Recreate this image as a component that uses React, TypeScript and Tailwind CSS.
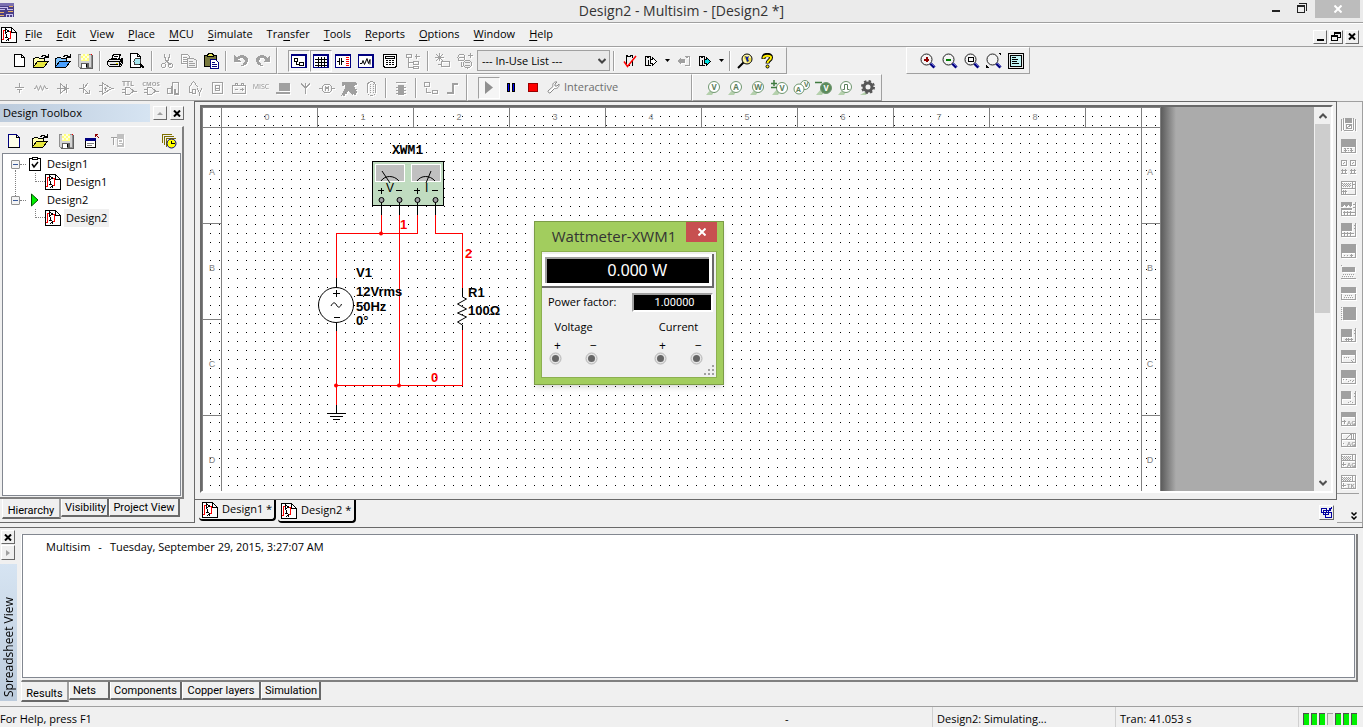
import type { ReactNode } from "react";

type Children = { children: ReactNode };

function Icon({ children }: Children) {
  return (
    <svg
      width="16"
      height="16"
      viewBox="0 0 16 16"
      fill="none"
      stroke="#000"
      shapeRendering="crispEdges"
      aria-hidden="true"
      className="shrink-0"
    >
      {children}
    </svg>
  );
}

// disabled icons: grey with a white edge at the lower right
function GrayIcon({ children }: Children) {
  return (
    <svg
      width="16"
      height="16"
      viewBox="0 0 16 16"
      fill="none"
      stroke="#a0a0a0"
      shapeRendering="crispEdges"
      aria-hidden="true"
      className="shrink-0 overflow-visible drop-shadow-[1px_1px_0_white]"
    >
      {children}
    </svg>
  );
}

function Tool({ label, children }: { label: string } & Children) {
  return (
    <button
      aria-label={label}
      className="flex h-[22px] w-[22px] shrink-0 items-center justify-center"
    >
      {children}
    </button>
  );
}

function PressedTool({ label, children }: { label: string } & Children) {
  return (
    <button
      aria-label={label}
      className="flex h-[22px] w-[22px] shrink-0 items-center justify-center border border-t-[#a0a0a0] border-r-white border-b-white border-l-[#a0a0a0] bg-[#f5f5f5]"
    >
      {children}
    </button>
  );
}

function Sep() {
  return (
    <div className="flex w-2 shrink-0 justify-center">
      <div className="h-5 w-0.5 border-r border-l border-r-white border-l-[#a0a0a0]" />
    </div>
  );
}

function DropArrow() {
  return (
    <button aria-label="More" className="flex w-[10px] justify-center">
      <svg width="5" height="3" viewBox="0 0 5 3" aria-hidden="true">
        <path d="M0 0h5L2.500 3z" />
      </svg>
    </button>
  );
}

function SchematicPage() {
  return (
    <Icon>
      <path d="M.5 .5h10l5 5v10H.5z" fill="#fff" />
      <path d="M10.500 1v4.500H15" />
      <path d="M1 12.500h1.500v-9H4M7 4.500h2.500v7H8" stroke="#f00" />
      <path d="M4.500 1.500v5l3-2.500zM5.500 7v3M4 10.500h3M4.500 14.500l3-3M7.500 11v3" />
    </Icon>
  );
}

function OpenFolder({ fill, back }: { fill: string; back: string }) {
  return (
    <Icon>
      <path d="M.5 14V5.500h1l1-1h3l1 1h5V9" fill={back} />
      <path d="M.5 14l4-5.500h11l-4.500 5.500z" fill={fill} />
      <path d="M8 3.500h1v-1h3v1h1v1M15.500 1v4M11 4.500h4M13 3.500h2" />
    </Icon>
  );
}

function Floppy() {
  return (
    <Icon>
      <path d="M1.500 1.500h13v13h-12l-1-1z" fill="#d4d4d4" stroke="#909090" />
      <path d="M4 1h8v7H4z" fill="#ffff80" stroke="none" />
      <path d="M4 1h2v2H4zM8 1h2v2H8zM6 3h2v2H6zM10 3h2v2h-2zM4 5h2v2H4zM8 5h2v2H8z" fill="#ffffe0" stroke="none" />
      <path d="M4 10h8v5H4z" fill="#606060" stroke="none" />
      <path d="M5 11h4v4H5z" fill="#fff" stroke="none" />
      <path d="M9 11h1v3H9z" fill="#000" stroke="none" />
      <path d="M15.500 2v13.500H3" stroke="#606060" />
      <path d="M14 1h1v1h-1z" fill="#f00" stroke="none" />
    </Icon>
  );
}

function Magnifier({ children }: { children?: ReactNode }) {
  return (
    <svg width="16" height="16" viewBox="0 0 16 16" fill="none" aria-hidden="true">
      <circle cx="6.500" cy="6.500" r="5.500" fill="#f4f4f4" stroke="#222" />
      <path d="M10.500 10.500l4 4" stroke="#000080" strokeWidth="3" />
      <path d="M11 10l3.500 3.500" stroke="#8080e0" strokeWidth=".8" />
      <g shapeRendering="crispEdges">{children}</g>
    </svg>
  );
}

function Probe({ letter, sign, solid }: { letter: string; sign?: string; solid?: boolean }) {
  return (
    <svg width="18" height="16" viewBox="0 0 18 16" aria-hidden="true">
      <path d="M1 15h6l4-6-4-1z" fill="#b4d0ac" />
      <circle
        cx={sign ? 11 : 9}
        cy={sign ? 8 : 7}
        r="5.500"
        fill={solid ? "#5b8a5b" : "#fff"}
        stroke="#6f966f"
      />
      <text
        x={sign ? 11 : 9}
        y={sign ? 11 : 10}
        textAnchor="middle"
        fontSize="8"
        fontWeight="bold"
        fill={solid ? "#fff" : "#5b7d5b"}
      >
        {letter}
      </text>
      {sign && (
        <path
          d={sign === "plus" ? "M0 3.500h6M3 0v6M0 7.500h6" : "M0 2.500h7"}
          stroke="#3f7a3f"
          strokeWidth="1.500"
        />
      )}
    </svg>
  );
}

const menus = [
  "File",
  "Edit",
  "View",
  "Place",
  "MCU",
  "Simulate",
  "Transfer",
  "Tools",
  "Reports",
  "Options",
  "Window",
  "Help",
];

function MenuLabel({ text }: { text: string }) {
  // Transfer is the only one whose shortcut is not the first letter
  const at = text === "Transfer" ? 3 : 0;
  return (
    <>
      {text.slice(0, at)}
      <u className="underline-offset-2">{text[at]}</u>
      {text.slice(at + 1)}
    </>
  );
}

function TitleBar() {
  return (
    <header className="relative flex h-[23px] shrink-0 items-start justify-between border-b border-[#a0a0a0] bg-[#ebebeb]">
      <svg width="15" height="15" viewBox="0 0 15 15" className="mt-[3px]" shapeRendering="crispEdges" aria-hidden="true">
        <path d="M0 0h14v14H0z" fill="#4a3f86" />
        <path d="M0 0h14v3H0z" fill="#7a70b0" />
        <path d="M0 9.500h4M9 3.500h4M8 8.500h5M0 12.500h4" stroke="#e8b060" />
        <path d="M0 4.500h7v2h6M0 6.500h5M6.500 14v-3h6v3M9.500 11v3" stroke="#c8c0f0" fill="none" />
      </svg>
      <h1 className="absolute inset-x-0 top-0 text-center text-[14px] leading-[22px] text-[#333]">
        Design2 - Multisim - [Design2 *]
      </h1>
      <div className="relative flex pr-[3px]">
        <button aria-label="Minimize" className="flex h-[18px] w-[26px] justify-center">
          <span className="mt-[10px] h-0.5 w-2 bg-[#222]" />
        </button>
        <button aria-label="Restore" className="flex h-[18px] w-[26px] justify-center pt-[3px]">
          <svg width="10" height="10" viewBox="0 0 10 10" fill="none" stroke="#222" shapeRendering="crispEdges">
            <path d="M2 .5h7.500V8M.5 2.500h7v7h-7zM0 3.500h8" />
          </svg>
        </button>
        <button aria-label="Close" className="flex h-[18px] w-[45px] items-center justify-center bg-[#bcbcbc]">
          <svg width="8" height="8" viewBox="0 0 8 8" stroke="#fff" strokeWidth="2">
            <path d="M.5 .5l7 7M7.500 .5l-7 7" />
          </svg>
        </button>
      </div>
    </header>
  );
}

const raised =
  "flex items-center justify-center border border-t-white border-r-[#696969] border-b-[#696969] border-l-white bg-[#f0f0f0]";

function CrossMark() {
  return (
    <svg width="8" height="7" viewBox="0 0 8 7" stroke="#000" strokeWidth="2" aria-hidden="true">
      <path d="M1 .5l6 6M7 .5l-6 6" />
    </svg>
  );
}

function MenuBar() {
  return (
    <nav className="flex h-6 shrink-0 items-center border-t border-b border-t-white border-b-[#a0a0a0] pr-1 pb-px pl-px">
      <SchematicPage />
      <div className="ml-2 flex flex-1 gap-[14px] text-[11px]">
        {menus.map((menu) => (
          <button key={menu}>
            <MenuLabel text={menu} />
          </button>
        ))}
      </div>
      <div className="flex gap-0.5 pt-1">
        <button aria-label="Minimize design" className={`${raised} h-[14px] w-[14px]`}>
          <span className="mt-[6px] h-0.5 w-[7px] bg-black" />
        </button>
        <button aria-label="Restore design" className={`${raised} h-[14px] w-[14px]`}>
          <svg width="10" height="9" viewBox="0 0 10 9" fill="none" stroke="#000" shapeRendering="crispEdges">
            <path d="M3.500 3V.5h6v5H7M3 1.500h6M.5 3.500h6v5h-6zM0 4.500h6" />
          </svg>
        </button>
        <button aria-label="Close design" className={`${raised} h-[14px] w-[14px]`}>
          <CrossMark />
        </button>
      </div>
    </nav>
  );
}

const bar =
  "flex h-[27px] items-center border-t border-r border-b border-t-white border-r-[#a0a0a0] border-b-[#a0a0a0]";

function MainToolbar() {
  return (
    <div className="flex">
      <div className={`${bar} w-[277px] pl-2`}>
        <Tool label="New">
          <Icon>
            <path d="M3.500 1.500h7l3 3v9h-10z" fill="#fff" />
            <path d="M10.500 1.500v3h3" />
          </Icon>
        </Tool>
        <Tool label="Open">
          <OpenFolder fill="#e8e840" back="#ffffb0" />
        </Tool>
        <Tool label="Open sample">
          <OpenFolder fill="#4aa0ff" back="#80c4ff" />
        </Tool>
        <Tool label="Save">
          <Floppy />
        </Tool>
        <Sep />
        <Tool label="Print">
          <Icon>
            <path d="M4.500 7l2-6h7l-2 6z" fill="#fff" />
            <path d="M7 3.500h4M6 5.500h4" />
            <path d="M.5 8.500l2-2h11l2-1v5l-2 3H2.500l-2-2z" fill="#e8e8e8" />
            <path d="M.5 8.500h12v5M13 9l2-3M13 11.500l2-3M3 11.500h8M2 13h11" />
            <path d="M9 10h2" stroke="#e8e000" />
          </Icon>
        </Tool>
        <Tool label="Print preview">
          <Icon>
            <path d="M1.500 .5h7l3 3v11h-10z" fill="#fff" />
            <path d="M8.500 .5v3h3" />
            <circle cx="8.500" cy="8.500" r="3.500" fill="#a8e8f0" stroke="#444" />
            <path d="M11 11l4 4" strokeWidth="2" />
          </Icon>
        </Tool>
        <Sep />
        <Tool label="Cut">
          <GrayIcon>
            <path d="M5.500 1v3l1 1v2l5 5M10.500 1v3l-1 1v2l-5 4" />
            <circle cx="4.500" cy="12.500" r="2" />
            <circle cx="11.500" cy="12.500" r="2" />
          </GrayIcon>
        </Tool>
        <Tool label="Copy">
          <GrayIcon>
            <path d="M.5 1.500h6l2 2v7h-8zM2 4.500h4M2 6.500h4M2 8.500h4" />
            <path d="M6.500 5.500h6l3 2v7h-9z" fill="#f0f0f0" />
            <path d="M8 8.500h4M8 10.500h6M8 12.500h6" />
          </GrayIcon>
        </Tool>
        <Tool label="Paste">
          <Icon>
            <path d="M1.500 2.500h12v11h-12z" fill="#77773c" />
            <path d="M4.500 3.500v-2h1v-1h4v1h1v2z" fill="#e8e85a" />
            <path d="M7.500 6.500h5l3 3v6h-8z" fill="#fff" stroke="#000080" />
            <path d="M9 9.500h3M9 11.500h5M9 13.500h5" stroke="#000080" />
          </Icon>
        </Tool>
        <Sep />
        <Tool label="Undo">
          <GrayIcon>
            <path d="M1 2v7h7L5.500 6.500C8 3.500 12.500 5 11.500 8.500 11 11 9 12 7 13.500c4 0 8-2 8-6.500S8 0 3.500 4.500z" fill="#a0a0a0" stroke="none" />
          </GrayIcon>
        </Tool>
        <Tool label="Redo">
          <GrayIcon>
            <path d="M15 2v7H8l2.500-2.500C8 3.500 3.500 5 4.500 8.500 5 11 7 12 9 13.500 5 13.500 1 11.500 1 7s7-7 11.500-2.500z" fill="#a0a0a0" stroke="none" />
          </GrayIcon>
        </Tool>
      </div>

      <div className={`${bar} w-[510px] border-l border-l-white pl-[10px]`}>
        <PressedTool label="Design toolbox">
          <Icon>
            <path d="M.5 1.500h15v13H.5z" fill="#fff" stroke="#000080" />
            <path d="M0 2.500h16M14.500 2v13" stroke="#000080" />
            <path d="M3.500 5.500h3v3h-3zM8.500 9.500h4v3h-4zM5.500 9v2.500H8" />
          </Icon>
        </PressedTool>
        <PressedTool label="Spreadsheet view">
          <Icon>
            <path d="M.5 1.500h15v13H.5z" fill="#fff" stroke="#000080" />
            <path d="M0 2.500h16M14.500 2v13" stroke="#000080" />
            <path d="M2 6.500h12M2 9.500h12M2 12.500h12M5.500 4v10M8.500 4v10M11.500 4v10" />
          </Icon>
        </PressedTool>
        <div className="flex w-[92px] justify-between">
          <Tool label="Database manager">
            <Icon>
              <path d="M.5 1.500h15v13H.5z" fill="#fff" stroke="#000080" />
              <path d="M0 2.500h16" stroke="#000080" />
              <path d="M2 8.500h2M4.500 5v7M6.500 5v7M7 8.500h2" />
              <path d="M11 4.500h3M11 6.500h3M11 8.500h3M11 10.500h3M11 12.500h3" stroke="#f00" />
            </Icon>
          </Tool>
          <Tool label="Grapher">
            <Icon>
              <path d="M.5 1.500h15v13H.5z" fill="#fff" stroke="#000080" />
              <path d="M0 2.500h16M14.500 2v13" stroke="#000080" />
              <path d="M2 10.500h2l1-3 1.500 4 2.500-6 1.500 5 1.500-4v5" shapeRendering="auto" />
            </Icon>
          </Tool>
          <Tool label="Postprocessor">
            <Icon>
              <path d="M1.500 1.500h13v12h-1v1h-11v-1h-1z" fill="#fff" />
              <path d="M3.500 3.500h9v2h-9zM4 7.500h2M7 7.500h2M10 7.500h2M4 9.500h2M7 9.500h2M10 9.500h2M4 11.500h2M7 11.500h2M10 11.500h2" />
            </Icon>
          </Tool>
          <Tool label="Parent sheet">
            <GrayIcon>
              <path d="M1.500 1.500h5v3h-5zM3.500 5v9.500H8M3.500 9.500H8M8.500 8.500h5v3h-5zM8.500 13.500h5v2h-5zM11.500 1v5M9.500 3.500h5" />
            </GrayIcon>
          </Tool>
        </div>
        <Sep />
        <Tool label="Create component">
          <GrayIcon>
            <path d="M6.500 8.500h8v5h-8zM4.500 0v8M1 1l7 7M8 1L1 8M0 4.500h9M3 11.500h3" />
          </GrayIcon>
        </Tool>
        <Tool label="Electrical rules">
          <GrayIcon>
            <circle cx="4.500" cy="4.500" r="3.500" />
            <circle cx="10.500" cy="11" r="4" fill="#f0f0f0" />
            <path d="M2 4.500h5M8 9.500h5M8 12.500h5M4 9v4h2M13 0v5M10.500 2.500h5" />
          </GrayIcon>
        </Tool>
        <select
          aria-label="In-use list"
          className="ml-px h-[21px] w-[133px] shrink-0 appearance-none border border-[#a0a0a0] bg-[#e8e8e8] px-1 text-[11px] leading-[18px]"
        >
          <option>--- In-Use List ---</option>
        </select>
        <svg width="8" height="6" viewBox="0 0 8 6" className="pointer-events-none -ml-3 mr-1 shrink-0" aria-hidden="true">
          <path d="M.5 1L4 4.500 7.500 1" fill="none" stroke="#444" strokeWidth="2" />
        </svg>
        <Sep />
        <Tool label="Rules check">
          <Icon>
            <path d="M5.500 11V2.500h1v1h3v-1h2v2M11.500 8v4.500M8 12.500h1" />
            <path d="M3 8.500l3.500 5L15 3" stroke="#f00" strokeWidth="1.500" shapeRendering="auto" />
          </Icon>
        </Tool>
        <Tool label="Transfer to layout">
          <Icon>
            <path d="M2.500 3.500h2v1h1v-1h2v2M2.500 3v9.500h5M5.500 7v5" />
            <path d="M7.500 6.500h2v-2l4 4-4 4v-2h-2z" fill="#fff" />
          </Icon>
        </Tool>
        <DropArrow />
        <Tool label="Back annotate">
          <GrayIcon>
            <path d="M9.500 3.500h2v1h1v-1h2v9h-5" />
            <path d="M2 8l4-4v2h4v4H6v2z" fill="#a0a0a0" stroke="none" />
          </GrayIcon>
        </Tool>
        <Tool label="Forward annotate">
          <Icon>
            <path d="M2.500 3.500h2v1h1v-1h2v2M2.500 3v9.500h5M5.500 7v5" />
            <path d="M7.500 6.500h2v-2l4 4-4 4v-2h-2z" fill="#00e0e0" />
          </Icon>
        </Tool>
        <DropArrow />
        <Sep />
        <Tool label="Find examples">
          <svg width="16" height="16" viewBox="0 0 16 16" aria-hidden="true">
            <path d="M1 15l6-6" stroke="#000" strokeWidth="2" />
            <circle cx="10" cy="6" r="5" fill="#fff8b0" stroke="#000" />
            <path d="M7 3h3l1 2h3v3l-4 2-1-3-2-1z" fill="#f0e040" />
            <path d="M8 3l2 1 2-1-1 3 1 2-2 1-1-3z" fill="#1020a0" />
          </svg>
        </Tool>
        <Tool label="Help">
          <svg width="14" height="16" viewBox="0 0 14 16" aria-hidden="true">
            <path d="M3.500 6V4.500C4 1 11 1 11 4.500c0 3-3.500 2.500-3.500 6" fill="none" stroke="#000" strokeWidth="4" />
            <path d="M3.500 5.500v-1C4 2 11 2 11 4.500c0 3-3.500 2.500-3.500 5.500" fill="none" stroke="#ffee00" strokeWidth="2" />
            <circle cx="7.500" cy="13.500" r="1.500" fill="#ffee00" stroke="#000" />
          </svg>
        </Tool>
      </div>

      <div className={`${bar} ml-[119px] w-[124px] border-l border-l-white pl-[10px]`}>
        <Tool label="Zoom in">
          <Magnifier>
            <path d="M4 6.500h5M6.500 4v5" stroke="#900000" strokeWidth="2" />
          </Magnifier>
        </Tool>
        <Tool label="Zoom out">
          <Magnifier>
            <path d="M4 6.500h5" stroke="#008000" strokeWidth="2" />
          </Magnifier>
        </Tool>
        <Tool label="Zoom area">
          <Magnifier>
            <path d="M4.500 4.500h5v4h-5z" stroke="#000" />
          </Magnifier>
        </Tool>
        <Tool label="Zoom sheet">
          <Magnifier>
            <path d="M12 0h3v3zM0 12v3h3z" fill="#000" />
          </Magnifier>
        </Tool>
        <Tool label="Full screen">
          <Icon>
            <rect x=".5" y=".5" width="15" height="15" fill="#e8e8e8" />
            <rect x="2.500" y="2.500" width="11" height="11" fill="#c0f4f4" />
            <path d="M4 4.500h4M4 6.500h6M4 8.500h5M4 10.500h7" />
          </Icon>
        </Tool>
      </div>
    </div>
  );
}

const componentIcons: { name: string; art: ReactNode }[] = [
  { name: "Source", art: <path d="M8.500 3v4M4 7.500h9M6 9.500h5M8.500 10v3" /> },
  { name: "Basic", art: <path d="M1 8.500h1.500l1-3 2 5 2-5 2 5 2-5 1.500 3H15" shapeRendering="auto" /> },
  { name: "Diode", art: <path d="M2 8.500h12M5.500 4v9l6-4.500zM11.500 4v9" /> },
  { name: "Transistor", art: <path d="M2 8.500h4M6.500 4v9M7 8l4-5M7 9l5 5M8 13.500h4v-4" /> },
  { name: "Analog", art: <path d="M3.500 3v11l9-5.500zM0 5.500h3M0 11.500h3M12 8.500h3M6 6.500v4M5 8.500h3" /> },
  {
    name: "TTL",
    art: (
      <>
        <path d="M4.500 7.500h4l4 3.500-4 3.500h-4zM1 9.500h3M1 12.500h3M13 11.500h3" />
        <text x="1" y="6" fontSize="7" fontWeight="bold" fill="#a0a0a0" stroke="none">TTL</text>
      </>
    ),
  },
  {
    name: "CMOS",
    art: (
      <>
        <path d="M4.500 7.500h4l4 3.500-4 3.500h-4zM1 9.500h3M1 12.500h3M13 11.500h3" />
        <text x="8" y="6" textAnchor="middle" fontSize="6" fontWeight="bold" fill="#a0a0a0" stroke="none">CMOS</text>
      </>
    ),
  },
  { name: "Misc digital", art: <path d="M7.500 14V2.500h6V14M2.500 8.500h4v5h-4zM6.500 6v8M10 9v5h4" strokeWidth="1.500" /> },
  { name: "Mixed", art: <path d="M6.500 1l-4 6v5h2M6.500 1l4 6M5.500 9.500h3v4h-3zM10 8l2.500 5L15 8M12 13v3" /> },
  { name: "Indicator", art: <path d="M3.500 2.500h10v11h-10zM6.500 5.500h4v5h-4zM7 8.500h3" /> },
  { name: "Power", art: <path d="M1.500 5.500h13v8h-13zM4 5V3.500h2V5M10 5V3.500h2V5M4 9.500h3M9 9.500h4M11.500 8v3" /> },
  {
    name: "Misc",
    art: <text x="8" y="9" textAnchor="middle" fontSize="7" fill="#909090" stroke="none">MISC</text>,
  },
  { name: "Peripherals", art: <path d="M4.500 3.500h10v7h-10zM1.500 12.500h13v1h-13z" fill="#a0a0a0" /> },
  { name: "RF", art: <path d="M8.500 3v11M4 3.500l4.500 4.500L13 3.500" /> },
  { name: "Electromechanical", art: <><circle cx="8" cy="8.500" r="4.500" /><path d="M0 8.500h3M13 8.500h3M6.500 11V6.500L8 9l1.500-2.500V11" /></> },
  { name: "NI component", art: <path d="M1 2h14v3h-2v4h2v5h-4l-3-4-4 5H1l3-6V5H1z" fill="#a0a0a0" strokeDasharray="2 1" /> },
  { name: "Connector", art: <><rect x="4.500" y="1.500" width="8" height="14" rx="4" /><path d="M7.500 4v9M10.500 4v9" strokeDasharray="1 1" /></> },
];

function ComponentToolbar() {
  return (
    <div className="flex">
      <div className={`${bar} w-[467px] pl-2`}>
        {componentIcons.map(({ name, art }) => (
          <Tool key={name} label={name}>
            <GrayIcon>{art}</GrayIcon>
          </Tool>
        ))}
        <Sep />
        <Tool label="MCU">
          <GrayIcon>
            <path d="M3 2.500h10M5.500 5.500h5v9h-5z" fill="#a0a0a0" strokeWidth="1.500" />
            <path d="M3 7.500h10M3 10.500h10M3 13.500h10" />
          </GrayIcon>
        </Tool>
        <Sep />
        <Tool label="Hierarchical block">
          <GrayIcon>
            <path d="M1.500 2.500h5v4h-5zM9.500 10.500h5v3h-5zM3.500 8v4H8" />
          </GrayIcon>
        </Tool>
        <Tool label="Bus">
          <GrayIcon>
            <path d="M2 13h6V4h5" strokeWidth="2" />
          </GrayIcon>
        </Tool>
      </div>
      <div className={`${bar} w-[225px] border-l border-l-white pl-[10px]`}>
        <PressedTool label="Run">
          <svg width="8" height="13" viewBox="0 0 8 13" aria-hidden="true">
            <path d="M0 0v13l8-6.500z" fill="#909090" />
          </svg>
        </PressedTool>
        <Tool label="Pause">
          <svg width="8" height="9" viewBox="0 0 8 9" fill="#0000ff" stroke="#000" shapeRendering="crispEdges">
            <path d="M.5 .5h2v8h-2zM5.500 .5h2v8h-2z" />
          </svg>
        </Tool>
        <Tool label="Stop">
          <span className="h-[9px] w-[10px] border border-[#900] bg-[#f00]" />
        </Tool>
        <button className="flex items-center gap-1 pl-[3px] text-[11px] text-[#6d6d6d]">
          <svg width="13" height="13" viewBox="0 0 13 13" fill="#fff" stroke="#888" aria-hidden="true">
            <path d="M1 10l5-4.500C5 2.500 7.500.5 10 1L8 3v2h2l2-2c.5 2.500-1.500 5-4.500 4.500L3 12c-1.500 0-2-1-2-2z" />
          </svg>
          Interactive
        </button>
      </div>
      <div className={`${bar} w-[190px] border-l border-l-white pl-[10px]`}>
        <Tool label="Voltage probe"><Probe letter="V" /></Tool>
        <Tool label="Current probe"><Probe letter="A" /></Tool>
        <Tool label="Power probe"><Probe letter="W" /></Tool>
        <Tool label="Differential probe"><Probe letter="V" sign="plus" /></Tool>
        <Tool label="Voltage and current probe">
          <svg width="18" height="16" viewBox="0 0 18 16" fontSize="7" fontWeight="bold" aria-hidden="true">
            <g fill="#fff" stroke="#6f966f">
              <circle cx="12" cy="5" r="4.500" />
              <circle cx="6" cy="9" r="5" />
            </g>
            <text x="3" y="12" fill="#5b7d5b">A</text>
            <text x="11" y="7" fill="#5b7d5b">V</text>
          </svg>
        </Tool>
        <Tool label="Reference probe"><Probe letter="V" sign="minus" solid /></Tool>
        <Tool label="Digital probe">
          <svg width="18" height="16" viewBox="0 0 18 16" aria-hidden="true">
            <path d="M1 15h6l4-6-4-1z" fill="#b4d0ac" />
            <circle cx="9" cy="7" r="5.500" fill="#fff" stroke="#6f966f" />
            <path d="M5.500 9.500h2v-5h3v5h2" fill="none" stroke="#5b7d5b" />
          </svg>
        </Tool>
        <Tool label="Probe settings">
          <svg width="18" height="16" viewBox="0 0 18 16" aria-hidden="true">
            <path d="M1 15h6l4-6z" fill="#b4d0ac" />
            <circle cx="9" cy="7" r="4" fill="none" stroke="#555" strokeWidth="3" />
            <circle cx="9" cy="7" r="6" fill="none" stroke="#555" strokeWidth="2" strokeDasharray="2.400 2.300" />
          </svg>
        </Tool>
      </div>
    </div>
  );
}

function TreeNode({ name, children }: { name: string } & Children) {
  return (
    <li className="relative">
      <div className="flex h-[18px] items-center">
        <button aria-label={`Collapse ${name}`} className="flex h-[9px] w-[9px] items-center justify-center rounded-[1px] border border-[#919191] bg-[#f4f4f4]">
          <span className="h-px w-[5px] bg-[#3a5a9a]" />
        </button>
        <span className="w-[6px] border-t border-dotted border-[#808080]" />
        <span className="flex w-[18px] justify-center">{children}</span>
        <span className="px-[3px]">{name}</span>
      </div>
      <div className="ml-[24px] flex h-[18px] items-center">
        <span className="h-[9px] w-[10px] self-start border-b border-l border-dotted border-[#808080]" />
        <SchematicPage />
        <span className={name === "Design2" ? "ml-[3px] bg-[#f0f0f0] px-0.5 leading-[18px]" : "ml-[3px] px-0.5 leading-[18px]"}>
          {name}
        </span>
      </div>
    </li>
  );
}

const lowTab =
  "h-[18px] whitespace-nowrap border-r-2 border-b-2 border-l border-r-[#696969] border-b-[#696969] border-l-white px-[3px] pt-px font-['Roboto'] leading-4";
const frontTab =
  "h-5 whitespace-nowrap border-r-2 border-b-2 border-l border-r-[#a0a0a0] border-b-[#696969] border-l-white px-1 pt-0.5 font-['Roboto'] leading-5";

function DesignToolbox() {
  return (
    <aside className="mb-1 flex w-[195px] shrink-0 flex-col border-r border-b border-[#696969] pr-[10px] text-[11px]">
      <div className="mt-[3px] flex h-[18px] items-center gap-[3px]">
        <h2 className="flex-1 bg-linear-to-r from-[#bccbdc] to-[#d6e4f2] pl-[3px] leading-[18px]">
          Design Toolbox
        </h2>
        <button aria-label="Roll up" className={`${raised} h-[14px] w-[14px]`}>
          <svg width="6" height="3" viewBox="0 0 6 3"><path d="M0 3h6L3 0z" fill="#a0a0a0" /></svg>
        </button>
        <button aria-label="Close toolbox" className={`${raised} h-[14px] w-[14px]`}>
          <CrossMark />
        </button>
      </div>
      <div className="mt-1 flex flex-1 flex-col border-t border-r-2 border-b-2 border-t-white border-r-[#808080] border-b-[#808080] pr-px pl-0.5">
        <div className="flex h-[26px] items-center pt-0.5 pr-1 pl-1">
          <div className="flex flex-1 gap-[10px]">
            <button aria-label="New design">
              <Icon>
                <path d="M2.500 1.500h8l3 3v10h-11z" fill="#ffffe8" stroke="#000080" />
                <path d="M10.500 1.500v3h3M2 14.500h12" stroke="#000" />
              </Icon>
            </button>
            <button aria-label="Open design"><OpenFolder fill="#e8e840" back="#ffffb0" /></button>
            <button aria-label="Save design"><Floppy /></button>
            <button aria-label="Close design">
              <Icon>
                <path d="M1.500 5.500h10v9h-10z" fill="#fff" />
                <path d="M1 5h11v3H1z" fill="#000080" stroke="none" />
                <path d="M3 10.500h7M3 12.500h5" stroke="#808080" />
                <path d="M11.500 1v3M11 1.500h3M12 2l3 3" stroke="#900000" />
              </Icon>
            </button>
            <button aria-label="Rename">
              <GrayIcon>
                <path d="M7 1h7v13H7z" fill="#c0c0c0" stroke="none" />
                <path d="M1 4.500h6M3.500 4v8" />
                <path d="M9 9.500h3v-3H8.500v5H12" stroke="#fff" />
              </GrayIcon>
            </button>
          </div>
          <button aria-label="History">
            <Icon>
              <path d="M1.500 10V1.500h9M3.500 12V3.500h9M5.500 14V5.500h9" stroke="#807000" />
              <circle cx="10.500" cy="10.500" r="4.500" fill="#ffff00" stroke="#000080" shapeRendering="auto" />
              <path d="M10.500 7.500v3h3" />
            </Icon>
          </button>
        </div>
        <ul className="relative mb-px flex-1 border border-[#828790] bg-white pt-px pl-2">
          <li aria-hidden="true" className="absolute top-4 left-3 h-[26px] border-l border-dotted border-[#808080]" />
          <TreeNode name="Design1">
            <Icon>
              <rect x="2.500" y="2.500" width="11" height="12" rx="1" fill="#fff" />
              <path d="M5.500 3.500v-2h5v2z" fill="#fff" />
              <path d="M5 8l2 3 4-5" strokeWidth="1.500" shapeRendering="auto" />
            </Icon>
          </TreeNode>
          <TreeNode name="Design2">
            <svg width="8" height="14" viewBox="0 0 8 14" aria-hidden="true">
              <path d="M.5 1v12L7 7z" fill="#00f000" stroke="#005000" />
            </svg>
          </TreeNode>
        </ul>
      </div>
      <div className="mb-[3px] flex items-start pl-0.5">
        <button className={`${frontTab} w-[59px]`}>Hierarchy</button>
        <button className={`${lowTab} w-[48px]`}>Visibility</button>
        <button className={`${lowTab} w-[71px]`}>Project View</button>
      </div>
    </aside>
  );
}

// one ruler division is 96px, the grid pitch is 9px
const columns = [0, 1, 2, 3, 4, 5, 6, 7, 8];
const rows = ["A", "B", "C", "D"];

function Sheet() {
  return (
    <svg
      width="959"
      height="384"
      viewBox="0 0 959 384"
      fill="none"
      className="shrink-0 bg-white"
      shapeRendering="crispEdges"
      role="img"
      aria-label="Design2 schematic"
    >
      <defs>
        <pattern id="grid" x="8" y="9" width="9" height="9" patternUnits="userSpaceOnUse">
          <rect width="1" height="1" fill="#000" />
        </pattern>
      </defs>
      <rect width="959" height="384" fill="url(#grid)" />
      <path d="M.5 384V.5h958V384M0 20.500h959M19.500 0v384M939.500 0v384" stroke="#808080" />
      <g fontSize="9" fill="#808080" textAnchor="middle" fontFamily="Liberation Sans">
        {columns.map((n) => (
          <g key={n}>
            <path d={`M${115.5 + n * 96} 0v20`} stroke="#808080" />
            <text x={65 + n * 96} y="13">{n}</text>
          </g>
        ))}
        {rows.map((letter, i) => (
          <g key={letter}>
            <path d={`M0 ${116.5 + i * 96}h19M940 ${116.5 + i * 96}h19`} stroke="#808080" />
            <text x="10" y={68 + i * 96}>{letter}</text>
            <text x="948" y={68 + i * 96}>{letter}</text>
          </g>
        ))}
      </g>

      {/* wires */}
      <g stroke="#f00">
        <path d="M134.500 171v-45" />
        <path d="M134 126.500h82" />
        <path d="M179.500 107v20" />
        <path d="M215.500 107v20" />
        <path d="M197.500 107v172" />
        <path d="M233.500 107v20" />
        <path d="M233 126.500h28" />
        <path d="M260.500 126v56" />
        <path d="M260.500 223v56" />
        <path d="M134 278.500h127" />
        <path d="M134.500 224v74" />
      </g>
      <g fill="#f00" shapeRendering="auto">
        <circle cx="179" cy="126.500" r="2" />
        <circle cx="134" cy="278.500" r="2" />
        <circle cx="197" cy="278.500" r="2" />
      </g>

      {/* wattmeter symbol */}
      <rect x="170.500" y="54.500" width="71" height="44" fill="#c0dcc0" stroke="#000" />
      <rect x="173.500" y="57.500" width="29" height="17" fill="#c0c0c0" stroke="#fff" />
      <rect x="209.500" y="57.500" width="29" height="17" fill="#c0c0c0" stroke="#fff" />
      <g stroke="#000">
        <path d="M179 74c4-6 13-6 18 0M180 64l8 12M215 74c4-6 13-6 18 0M229 64l-5 12" shapeRendering="auto" />
        <path d="M176 83.500h6M179 81v6M194 83.500h6M212 83.500h6M215 81v6M230 83.500h6" />
        <path d="M179.500 92v16M197.500 92v16M215.500 92v16M233.500 92v16" />
        <g fill="#a0a0a4" shapeRendering="auto">
          <circle cx="179.500" cy="93" r="2.500" />
          <circle cx="197.500" cy="93" r="2.500" />
          <circle cx="215.500" cy="93" r="2.500" />
          <circle cx="233.500" cy="93" r="2.500" />
        </g>
      </g>
      <g fill="#000" fontFamily="Liberation Sans" fontSize="12">
        <text x="184" y="85">V</text>
        <text x="223" y="85">I</text>
      </g>

      {/* source */}
      <g stroke="#000">
        <path d="M134.500 171v9M134.500 216v8" />
        <circle cx="134" cy="198" r="17.500" fill="#fff" shapeRendering="auto" />
        <path d="M131 186.500h7M134.500 183v7M132 210.500h6" />
        <path d="M129 199c2-4 4-4 5.500-1s3.500 3 5-1" shapeRendering="auto" />
      </g>

      {/* resistor */}
      <path
        d="M260.500 181v9l4 2-9 5 9 5-9 4 9 4-9 5 5 3v5"
        stroke="#000"
        shapeRendering="auto"
      />

      {/* ground */}
      <path d="M134.500 298v9M125 306.500h19M128 309.500h13M131 312.500h7" stroke="#000" />

      <g fontFamily="Liberation Sans" fontSize="13" fontWeight="bold" fill="#000">
        <text x="190" y="47" fontFamily="Liberation Mono">XWM1</text>
        <text x="154" y="170">V1</text>
        <text x="154" y="189">12Vrms</text>
        <text x="154" y="204">50Hz</text>
        <text x="154" y="218">0°</text>
        <text x="266" y="190">R1</text>
        <text x="266" y="208">100Ω</text>
        <g fill="#f00">
          <text x="198" y="122">1</text>
          <text x="263" y="151">2</text>
          <text x="229" y="275">0</text>
        </g>
      </g>
    </svg>
  );
}

function Terminal() {
  return (
    <svg width="13" height="13" viewBox="0 0 13 13" aria-hidden="true">
      <circle cx="6.500" cy="6.500" r="5.500" fill="#e4e4e4" stroke="#b4b4b4" />
      <circle cx="6.500" cy="6.500" r="3.500" fill="#666" />
    </svg>
  );
}

function TerminalPair({ name }: { name: string }) {
  return (
    <div className="w-[49px] text-center">
      <div className="leading-4">{name}</div>
      <div className="mt-1 flex justify-between">
        {["+", "−"].map((sign) => (
          <div key={sign} className="flex w-[13px] flex-col items-center">
            <span className="ml-1 text-[12px] leading-[13px]">{sign}</span>
            <Terminal />
          </div>
        ))}
      </div>
    </div>
  );
}

function Wattmeter() {
  return (
    <section
      aria-label="Wattmeter"
      className="absolute top-[114px] left-[332px] h-[164px] w-[190px] border border-[#7c9c48] bg-[#a2cd5e] px-[6px] pb-[6px] text-[11px] shadow-md"
    >
      <div className="relative h-[29px]">
        <h2 className="w-[146px] pt-[3px] text-center text-[15px] leading-[22px] text-[#333]">Wattmeter-XWM1</h2>
        <button aria-label="Close wattmeter" className="absolute top-0 right-0 flex h-5 w-[31px] items-center justify-center bg-[#c75050]">
          <svg width="8" height="8" viewBox="0 0 8 8" stroke="#fff" strokeWidth="2">
            <path d="M.5 .5l7 7M7.500 .5l-7 7" />
          </svg>
        </button>
      </div>
      <div className="relative h-[127px] border border-[#8cb050] bg-[#f0f0f0]">
        <div className="mt-0.5 mr-0.5 border-r-2 border-b-2 border-r-[#696969] border-b-[#696969] bg-white p-[3px]">
          <output className="block h-[26px] border-t-2 border-l-2 border-[#a0a0a0] bg-black pr-[42px] text-right font-['Liberation_Sans'] text-[16px] leading-6 text-white">
            0.000 W
          </output>
        </div>
        <div className="mt-[5px] flex items-center justify-between pr-[3px] pl-[6px]">
          <span>Power factor:</span>
          <output className="h-[19px] w-[81px] border-t-2 border-r-2 border-b-2 border-l-2 border-t-[#a0a0a0] border-r-white border-b-white border-l-[#a0a0a0] bg-black pl-1 text-center font-['Roboto'] leading-[15px] text-white">
            1.00000
          </output>
        </div>
        <div className="mt-[7px] flex justify-between pr-[13px] pl-[7px]">
          <TerminalPair name="Voltage" />
          <TerminalPair name="Current" />
        </div>
        <svg width="11" height="11" viewBox="0 0 11 11" fill="#a0a0a0" className="absolute right-px bottom-px" aria-hidden="true">
          <path d="M8 0h2v2H8zM4 4h2v2H4zM8 4h2v2H8zM0 8h2v2H0zM4 8h2v2H4zM8 8h2v2H8z" />
        </svg>
      </div>
    </section>
  );
}

function ScrollArrow({ label, d }: { label: string; d: string }) {
  return (
    <button aria-label={label} className="flex h-[17px] items-center justify-center">
      <svg width="8" height="6" viewBox="0 0 8 6" fill="none" stroke="#505050" strokeWidth="2">
        <path d={d} />
      </svg>
    </button>
  );
}

function DocTab({ name, front }: { name: string; front?: boolean }) {
  return (
    <button
      className={
        front
          ? "flex h-[23px] items-center gap-1 rounded-b border-r-2 border-b-2 border-black px-[3px]"
          : "flex h-[21px] items-center gap-1 rounded-b border-r-2 border-b-2 border-black pr-0.5 pl-[3px]"
      }
    >
      <SchematicPage />
      {name} *
    </button>
  );
}

function Workspace() {
  return (
    <main className="flex min-w-0 flex-1 flex-col">
      <div className="flex min-h-0 flex-1 flex-col border-t border-r border-b border-[#696969] pt-[3px] pr-[3px] pb-[6px] pl-[5px]">
        <div className="relative flex min-h-0 flex-1 overflow-hidden border-2 border-t-[#696969] border-r-white border-b-white border-l-[#696969]">
          <Sheet />
          <div className="min-w-0 flex-1 bg-[#ababab]">
            <div className="h-full w-[15px] bg-linear-to-r from-[#5c5c5c] to-[#ababab]" />
          </div>
          <div className="flex w-[17px] shrink-0 flex-col bg-[#f0f0f0]">
            <ScrollArrow label="Scroll up" d="M.5 5L4 1.500 7.500 5" />
            <div className="flex-1 px-px">
              <div className="h-[54%] bg-[#cdcdcd]" />
            </div>
            <ScrollArrow label="Scroll down" d="M.5 1L4 4.500 7.500 1" />
          </div>
          <Wattmeter />
        </div>
      </div>
      <div className="flex h-[27px] shrink-0 items-start justify-between pl-1 text-[11px]">
        <div className="flex items-start gap-0.5">
          <DocTab name="Design1" />
          <DocTab name="Design2" front />
        </div>
        <button aria-label="Window list" className={`${raised} mt-[5px] mr-[3px] h-[15px] w-[15px]`}>
          <svg width="12" height="11" viewBox="0 0 12 11" fill="#f0f0f0" stroke="#0000a0" shapeRendering="crispEdges">
            <path d="M.5 1.500h5v4h-5zM2.500 3.500h5v4h-5zM4.500 5.500h6v5h-6zM7 3.500h2.500M8.500 1v3M9 2.500l2-2" />
          </svg>
        </button>
      </div>
    </main>
  );
}

const hatch = "M2 3.500h1M4 3.500h1M6 3.500h1M8 3.500h1M10 3.500h1M3 4.500h1M5 4.500h1M7 4.500h1M9 4.500h1M2 5.500h1M4 5.500h1M6 5.500h1M8 5.500h1M10 5.500h1M3 6.500h1M5 6.500h1M7 6.500h1M9 6.500h1";

const instruments: { name: string; block?: string; lines: string; tag?: string }[] = [
  { name: "Multimeter", block: "M5 1h7v5H5z", lines: "M1.500 2v12M3.500 1v12M13.500 1v12M15.500 2v12M4 13.500h9M6.500 7.500h5v4h-5zM7 11l4-3" },
  { name: "Function generator", block: "M1 1h15v8H1z", lines: "M1.500 9v5.500h14V9M4 10.500h2M7 10.500h2M10 10.500h2M4 12.500h3M8 12.500h1M10 12.500h3M5.500 11v3M11.500 11v3" },
  { name: "Wattmeter instrument", lines: "M1.500 1.500h5v5h-5zM10.500 1.500h5v5h-5zM3 5l2-2M12 5l2-2M1 11.500h6M1 14.500h6M10 11.500h6M10 14.500h6M2.500 10v5M5.500 10v5M11.500 10v5M14.500 10v5" },
  { name: "Oscilloscope", lines: `M1.500 1.500h14v13h-14zM1 8.500h14M12.500 2v6M13 4.500h3M1 11.500h6M3.500 10v4M5.500 10v4${hatch}` },
  { name: "Four channel oscilloscope", block: "M1 1h11v3l-2 2-2-2-2 2-2-2-1 2H1zM1 7h11v2H1z", lines: "M1.500 9v5.500h14V1M13 3.500h3M13 6.500h3M3 11.500h12M4.500 10v4M7.500 10v4M10.500 10v4" },
  { name: "Bode plotter", block: "M1 1h11v8H1z", lines: "M1.500 9v5.500h14V1M14 3.500h2M14 6.500h2M2 11.500h12M4.500 10v4M7.500 10v4M10.500 10v4" },
  { name: "Frequency counter", block: "M1 1h15v9H1z", lines: "M1.500 9v5.500h14V9M4 12.500h1M7 12.500h1M10 12.500h3M11.500 11v3" },
  { name: "Word generator", block: "M2 3h13v5H2z", lines: "M1 1.500h1M1 14.500h15M3 10.500h1M5 10.500h1M7 10.500h1M9 10.500h1M11 10.500h1M13 10.500h1M2 12.500h1M4 12.500h1M6 12.500h1M8 12.500h1M10 12.500h1M12 12.500h1" },
  { name: "Logic converter", block: "M1 2h15v6H1z", lines: "M1.500 9v5.500h14V9M5 10.500h1M7 10.500h1M9 10.500h1M11 10.500h1M4 12.500h1M6 12.500h1M8 12.500h1M10 12.500h1M12 12.500h1" },
  { name: "Logic analyzer", block: "M3 1h13v13H3z", lines: "M1 1.500h1M1 3.500h1M1 5.500h1M1 7.500h1M1 9.500h1M1 11.500h1M1 13.500h1" },
  { name: "IV analyzer", block: "M1 2h11v8H1z", lines: "M1.500 9v5.500h14V1M14 3.500h1M14 6.500h1M5 12.500h8M6.500 11v3M8.500 11v3M11.500 11v3" },
  { name: "Distortion analyzer", block: "M1 2h15v5H1z", lines: "M1.500 7v7.500h14V7M4 9.500h1M6 9.500h1M8 9.500h1M11 12.500h1M13 11.500h1M12 13.500h1" },
  { name: "Spectrum analyzer", block: "M1 1h15v8H1z", lines: "M1.500 9v5.500h14V9M3 10.500h1M6 10.500h1M8 12.500h1M10 11.500h1M12 12.500h1M13 11.500h1" },
  { name: "Network analyzer", block: "M1 1h10v8H1z", lines: "M1.500 9v5.500h14V1M14 3.500h1M14 6.500h1M8 12.500h1M10 11.500h1M12 12.500h1" },
  { name: "Agilent function generator", block: "M1 1h15v5H1z", lines: "M1.500 6v8.500h14V6M2 10.500h4M4.500 9v4", tag: "AG" },
  { name: "Agilent multimeter", lines: "M1.500 1.500h14v13h-14zM1 7.500h14M6 7l5-5M11.500 2v5M13.500 2v5M3.500 11v1", tag: "AG" },
  { name: "Agilent oscilloscope", lines: `M1.500 1.500h14v13h-14zM1 7.500h14M12.500 2v5M2 11.500h4M3.500 9v4${hatch}`, tag: "AG" },
  { name: "Tektronix oscilloscope", lines: `M1.500 1.500h14v13h-14zM1 7.500h14M12.500 2v5M2 11.500h4M3.500 9v4${hatch}`, tag: "TK" },
];

function InstrumentBar() {
  return (
    <aside className="flex w-[26px] shrink-0 flex-col border-t border-r border-[#a0a0a0]">
      <div className="mr-[3px] flex flex-col items-center border-b border-[#a0a0a0] pt-3 pb-px">
        {instruments.map(({ name, block, lines, tag }) => (
          <button key={name} aria-label={name} className="flex h-[21px] w-[21px] items-center justify-center">
            <GrayIcon>
              {block && <path d={block} fill="#a0a0a0" stroke="none" />}
              <path d={lines} />
              {tag && (
                <text x="7" y="14" fontSize="6" fontWeight="bold" fill="#a0a0a0" stroke="none">
                  {tag}
                </text>
              )}
            </GrayIcon>
          </button>
        ))}
      </div>
      <button aria-label="More instruments" className="mb-1 flex flex-1 items-end justify-center border-b border-[#a0a0a0] pb-0.5 pl-2">
        <svg width="6" height="8" viewBox="0 0 6 8" fill="none" stroke="#000" strokeWidth="1.500">
          <path d="M.5 .5L3 3 5.500 .5M.5 4.500L3 7l2.500-2.500" />
        </svg>
      </button>
    </aside>
  );
}

function SpreadsheetView() {
  return (
    <section className="flex h-[179px] shrink-0 border-t border-[#696969] text-[11px]">
      <div className="flex w-[17px] shrink-0 flex-col pt-0.5">
        <button aria-label="Close spreadsheet" className={`${raised} ml-px h-[14px] w-[14px]`}>
          <CrossMark />
        </button>
        <button aria-label="Expand spreadsheet" className={`${raised} mt-px ml-px h-[15px] w-[14px]`}>
          <svg width="4" height="6" viewBox="0 0 4 6"><path d="M0 0v6l4-3z" fill="#a0a0a0" /></svg>
        </button>
        <h2 className="mt-1 mb-[5px] flex-1 rotate-180 bg-linear-to-b from-[#bccbdc] to-[#d6e4f2] pt-1 text-[12px] leading-[17px] [writing-mode:vertical-rl]">
          Spreadsheet View
        </h2>
      </div>
      <div className="flex flex-1 flex-col pr-[5px] pl-1">
        <div className="mt-[6px] flex flex-1 flex-col border-r-2 border-b-2 border-l border-r-[#808080] border-b-[#808080] border-l-white pr-px pb-0.5">
          <div className="flex flex-1 gap-2 border border-[#828790] bg-white pt-1 pl-[23px] leading-4">
            <span>Multisim</span>
            <span>-</span>
            <span>Tuesday, September 29, 2015, 3:27:07 AM</span>
          </div>
        </div>
        <div className="flex h-[24px] items-start">
          <button className={`${frontTab} w-[48px]`}>Results</button>
          <button className={`${lowTab} w-[41px] text-left`}>Nets</button>
          <button className={`${lowTab} w-[72px]`}>Components</button>
          <button className={`${lowTab} w-[79px]`}>Copper layers</button>
          <button className={`${lowTab} w-[60px]`}>Simulation</button>
        </div>
      </div>
    </section>
  );
}

const progress = [true, true, true, false, true, true, true];

function StatusBar() {
  return (
    <footer className="flex h-[21px] shrink-0 items-stretch border-t border-[#a0a0a0] text-[11px] leading-6">
      <div className="flex-1">For Help, press F1</div>
      <div className="w-[148px] border-r border-[#d0d0d0]">-</div>
      <div className="w-[183px] border-r border-[#d0d0d0] pl-1">Design2: Simulating...</div>
      <div className="w-[183px] border-r border-[#d0d0d0] pl-1">Tran: 41.053 s</div>
      <div className="flex w-[64px] items-center gap-0.5 pt-1 pl-1">
        {progress.map((on, i) => (
          <span
            key={i}
            className={
              on
                ? "h-3 w-[6px] border-t border-l border-[#505050] bg-[#00f000]"
                : "h-3 w-[6px] border-t border-l border-[#a0a0a0] bg-[#e8e8e0]"
            }
          />
        ))}
      </div>
    </footer>
  );
}

function App() {
  return (
    <div className="flex h-screen flex-col overflow-hidden bg-[#f0f0f0] font-['Open_Sans',sans-serif] text-black">
      <TitleBar />
      <MenuBar />
      <MainToolbar />
      <ComponentToolbar />
      <div className="flex min-h-0 flex-1">
        <DesignToolbox />
        <Workspace />
        <InstrumentBar />
      </div>
      <SpreadsheetView />
      <StatusBar />
    </div>
  );
}

export default App;
